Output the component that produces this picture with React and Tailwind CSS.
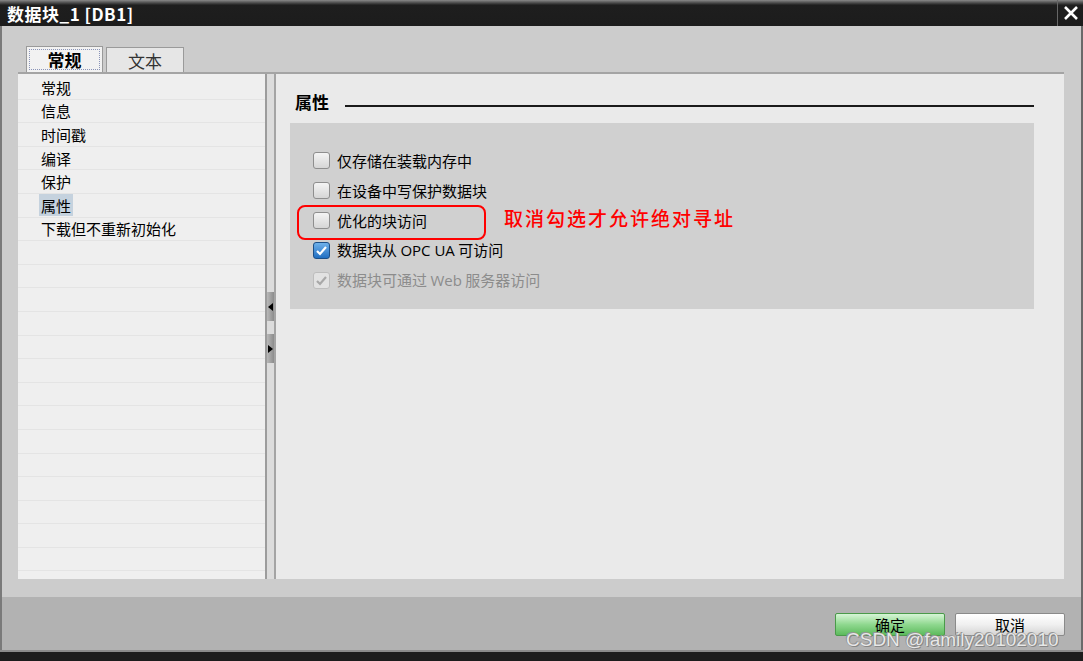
import React from 'react';

const FONT = { fontFamily: '"Noto Sans CJK SC", "Noto Sans", sans-serif' };

const navItems = ['常规', '信息', '时间戳', '编译', '保护', '属性', '下载但不重新初始化'];

const Checkbox = ({ checked, disabled }) => {
  if (checked && disabled) {
    return (
      <span className="w-[17px] h-[17px] rounded-[3px] border border-[#bdbdbd] bg-[#e2e2e2] flex items-center justify-center">
        <svg width="13" height="13" viewBox="0 0 13 13">
          <path d="M2 7 L5 10 L11 3" fill="none" stroke="#a8a8a8" strokeWidth="2.2" />
        </svg>
      </span>
    );
  }
  if (checked) {
    return (
      <span className="w-[17px] h-[17px] rounded-[3px] border border-[#1d4f87] bg-gradient-to-b from-[#6fb1ea] to-[#1f6fc2] flex items-center justify-center">
        <svg width="13" height="13" viewBox="0 0 13 13">
          <path d="M2 7 L5 10 L11 3" fill="none" stroke="#ffffff" strokeWidth="2.2" />
        </svg>
      </span>
    );
  }
  return (
    <span className="w-[17px] h-[17px] rounded-[3px] border border-[#8e8e8e] bg-gradient-to-b from-[#f4f4f4] to-[#d6d6d6]" />
  );
};

const options = [
  { label: '仅存储在装载内存中' },
  { label: '在设备中写保护数据块' },
  { label: '优化的块访问' },
  { label: <>数据块从 <span style={{ fontFamily: '"Open Sans", sans-serif' }}>OPC UA</span> 可访问</>, checked: true },
  { label: <>数据块可通过 <span style={{ fontFamily: '"Open Sans", sans-serif' }}>Web</span> 服务器访问</>, checked: true, disabled: true },
];

const Arrow = ({ dir }) => (
  <div className="w-[7px] h-[29px] bg-gradient-to-r from-[#b8b8b8] to-[#8c8c8c] flex items-center justify-center">
    <svg width="5" height="8" viewBox="0 0 5 8">
      {dir === 'left' ? <path d="M5 0 L0 4 L5 8 Z" fill="#000" /> : <path d="M0 0 L5 4 L0 8 Z" fill="#000" />}
    </svg>
  </div>
);

export default function App() {
  return (
    <div className="w-[1083px] h-[661px] flex flex-col bg-[#cccccc] relative overflow-hidden" style={FONT}>
      {/* title bar */}
      <div className="h-[26px] flex bg-gradient-to-b from-[#8a8a8a] via-[#1e1e1e] via-[20%] to-[#1c1c1c]">
        <div className="flex-1 pl-[7px] flex items-center text-white text-[17px] font-bold leading-none tracking-[0.5px]">
          数据块_1 [DB1]
        </div>
        <div className="w-[26px] border-l border-[#666] flex items-center justify-center">
          <svg width="16" height="16" viewBox="0 0 16 16">
            <path d="M2 2 L14 14 M14 2 L2 14" stroke="#fff" strokeWidth="2.6" />
          </svg>
        </div>
      </div>

      {/* body */}
      <div className="h-[571px] flex flex-col border-l-2 border-l-[#7a7a7a] border-r-2 border-r-[#6a6a6a] px-[16px] pt-[20px]">
        {/* tabs */}
        <div className="h-[26px] flex items-end pl-[8px] gap-[3px]">
          <div className="w-[77px] h-[26px] bg-[#f2f2f2] border border-[#9a9a9a] border-b-0 p-[2px]">
            <div className="w-full h-full border border-dotted border-[#8a94b8] flex items-center justify-center text-[17px] font-bold text-black leading-none">
              常规
            </div>
          </div>
          <div className="w-[78px] h-[25px] bg-[#e6e6e6] border border-[#9a9a9a] border-b-0 flex items-center justify-center text-[17px] text-[#333] leading-none">
            文本
          </div>
        </div>
        <div className="h-[507px] flex border-t-2 border-t-[#a4a4a4] w-[1046px]">
          {/* nav list */}
          <div className="w-[247px] bg-[#efefef] pt-[2px] flex flex-col overflow-hidden">
            {Array.from({ length: 21 }).map((_, i) => (
              <div key={i} className="h-[23.6px] shrink-0 border-b border-[#e4e4e4] flex items-center pl-[21px] text-[15px] text-black leading-none">
                {navItems[i] && (
                  <span className={`px-[2px] h-[22px] flex items-center ${navItems[i] === '属性' ? 'bg-[#c5d2de]' : ''}`}>
                    {navItems[i]}
                  </span>
                )}
              </div>
            ))}
          </div>
          {/* splitter */}
          <div className="w-[11px] flex border-l-2 border-[#9c9c9c] bg-[#d4d4d4]">
            <div className="w-[7px] flex flex-col pt-[218px] gap-[13px] bg-[#dcdcdc]">
              <Arrow dir="left" />
              <Arrow dir="right" />
            </div>
            <div className="w-[2px] bg-[#a4a4a4]" />
          </div>
          {/* right pane */}
          <div className="flex-1 bg-[#eaeaea] pl-[14px] pt-[16px]">
            <div className="flex items-end w-[744px] h-[20px]">
              <span className="pl-[5px] text-[17px] font-bold text-black leading-none">属性</span>
              <div className="flex-1 ml-[16px] mb-[3px] h-[2px] bg-[#1a1a1a]" />
            </div>
            <div className="relative mt-[13px] w-[744px] h-[186px] bg-[#d0d0d0] pt-[28px] pl-[23px] flex flex-col gap-[12px]">
              {options.map((o, i) => (
                <div key={i} className="h-[18px] flex items-center gap-[7px]">
                  <Checkbox checked={o.checked} disabled={o.disabled} />
                  <span className={`text-[15px] leading-none ${o.disabled ? 'text-[#8c8c8c]' : 'text-black'}`}>{o.label}</span>
                </div>
              ))}
              <div className="absolute left-[7px] top-[82px] w-[189px] h-[35px] border-2 border-[#ff0000] rounded-[8px]" />
              <div className="absolute left-[214px] top-[85px] text-[19px] font-medium text-[#ff0000] leading-none tracking-[2px]" style={{ fontFamily: '"Noto Sans CJK SC", serif' }}>
                取消勾选才允许绝对寻址
              </div>
            </div>
          </div>
        </div>
      </div>

      {/* footer */}
      <div className="h-[53px] bg-[#b2b2b2] border-l-2 border-l-[#7a7a7a] border-r-2 border-r-[#6a6a6a] flex justify-end items-start pt-[16px] pr-[16px] gap-[10px]">
        <div className="w-[110px] h-[23px] rounded-[2px] border border-[#4a9a4a] bg-gradient-to-b from-[#d6f5d6] via-[#8fd88f] to-[#5cba5c] flex items-center justify-center text-[15px] text-black leading-none">
          确定
        </div>
        <div className="w-[110px] h-[23px] rounded-[2px] border border-[#8a8a8a] bg-gradient-to-b from-[#ffffff] via-[#f0f0f0] to-[#d4d4d4] flex items-center justify-center text-[15px] text-black leading-none">
          取消
        </div>
      </div>
      <div className="h-[11px] bg-[#1c1c1c] border-t-2 border-[#8a8a8a]" />

      {/* watermark */}
      <div
        className="absolute left-[846px] top-[630px] text-[19px] text-[#e8e8e8] leading-none"
        style={{ fontFamily: '"Liberation Sans", sans-serif', textShadow: '0 0 1px #777, 1px 1px 0 #888, -1px -1px 0 #999' }}
      >
        CSDN @family20102010
      </div>
    </div>
  );
}
